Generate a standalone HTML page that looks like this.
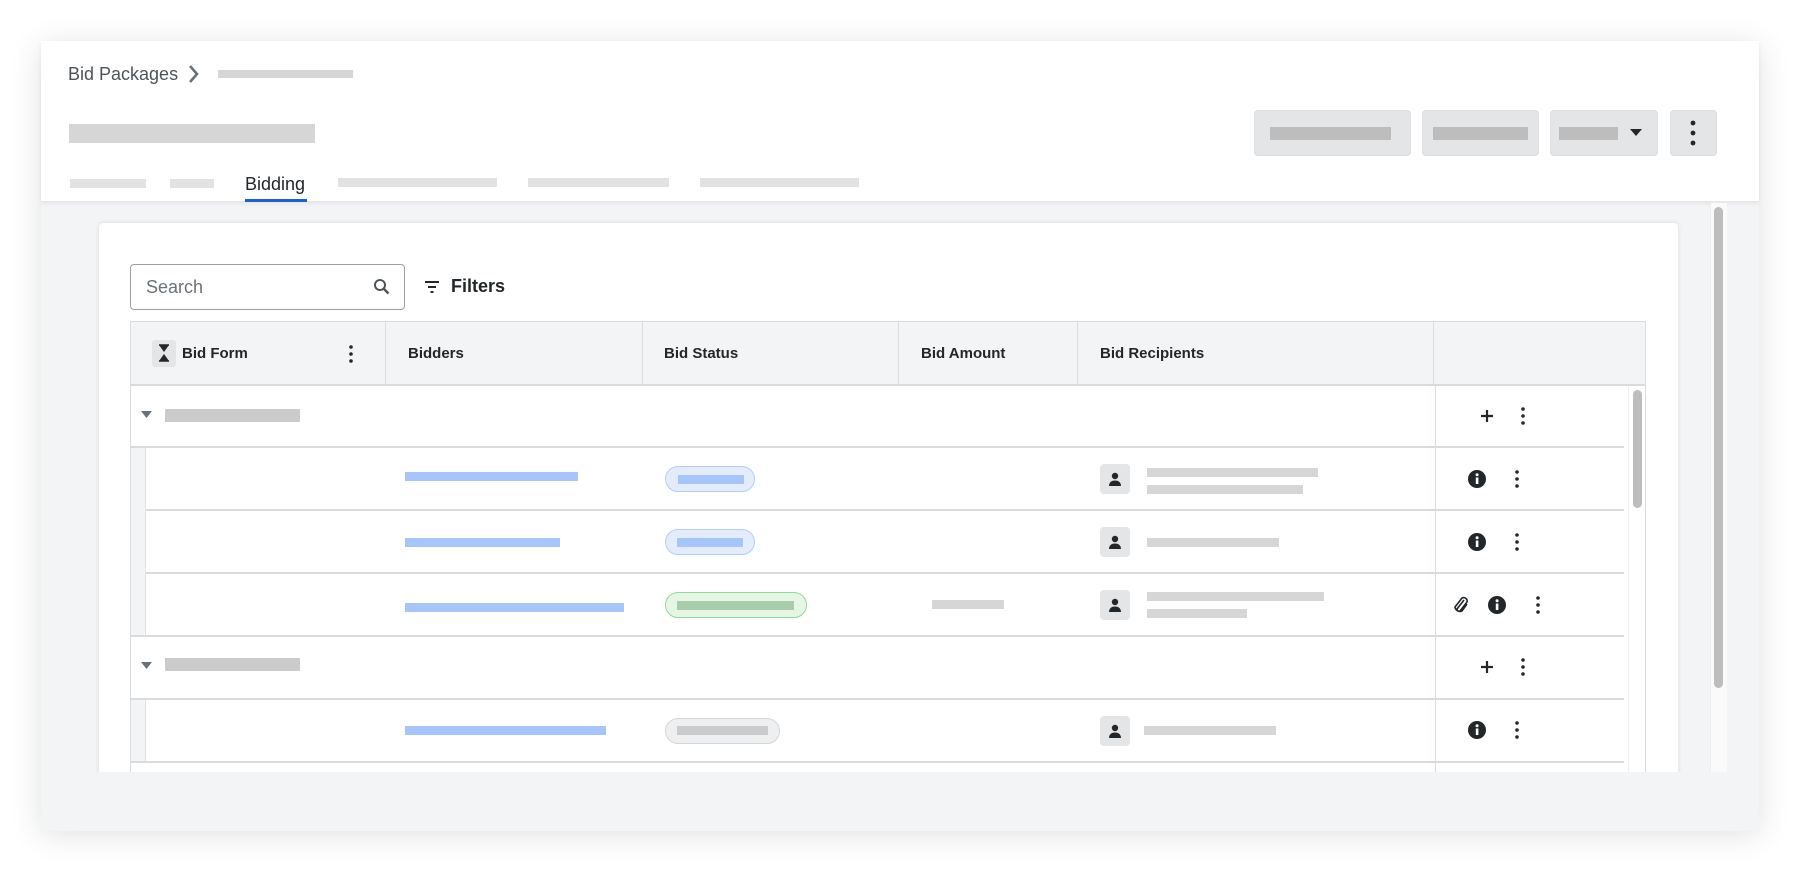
<!DOCTYPE html>
<html><head><style>
*{box-sizing:border-box;margin:0;padding:0}
body{width:1800px;height:873px;background:#fff;font-family:"Liberation Sans",sans-serif;position:relative;overflow:hidden}
.a{position:absolute}
.card{left:41px;top:41px;width:1718px;height:790px;background:#f3f4f6;box-shadow:0 4px 30px rgba(0,0,0,.12)}
.hdr{left:41px;top:41px;width:1718px;height:161px;background:#fff;border-bottom:1px solid #e6e7e9;box-shadow:0 2px 4px rgba(0,0,0,.06)}
.g{background:#d6d6d6}
.tb{background:#e2e2e2}
.btn{background:#e4e5e7;border-radius:4px;border:1px solid #dcdde0}
.bb{background:#bdbdbd}
.panel{left:99px;top:223px;width:1579px;height:550px;background:#fff;border-radius:4px 4px 0 0;box-shadow:0 0 4px rgba(0,0,0,.12)}
.hl{background:#d9dcdf}
.blue{background:#a6c5fa}
.pill{border-radius:14px;height:26px}
.ht{font-weight:bold;font-size:15px;color:#232729;top:345px}
.av{width:30px;height:30px;background:#e4e5e7;border-radius:4px}
</style></head><body>
<div class="a card"></div>
<div class="a hdr"></div>
<div class="a" style="left:68px;top:64px;font-size:18px;color:#4d5459">Bid Packages</div>
<svg class="a" style="left:187px;top:64px" width="14" height="20" viewBox="0 0 14 20"><path d="M3 2l7 8-7 8" fill="none" stroke="#6a7177" stroke-width="2.6"/></svg>
<div class="a g" style="left:218px;top:70px;width:135px;height:8px"></div>
<div class="a g" style="left:69px;top:124px;width:246px;height:19px"></div>
<div class="a tb" style="left:70px;top:179px;width:76px;height:9px"></div>
<div class="a tb" style="left:170px;top:179px;width:44px;height:9px"></div>
<div class="a" style="left:245px;top:174px;font-size:18px;color:#232729">Bidding</div>
<div class="a" style="left:245px;top:199px;width:62px;height:3px;background:#1c5fd8"></div>
<div class="a tb" style="left:338px;top:178px;width:159px;height:9px"></div>
<div class="a tb" style="left:528px;top:178px;width:141px;height:9px"></div>
<div class="a tb" style="left:700px;top:178px;width:159px;height:9px"></div>
<div class="a btn" style="left:1254px;top:110px;width:157px;height:46px"></div>
<div class="a bb" style="left:1270px;top:127px;width:121px;height:13px"></div>
<div class="a btn" style="left:1422px;top:110px;width:117px;height:46px"></div>
<div class="a bb" style="left:1433px;top:127px;width:95px;height:13px"></div>
<div class="a btn" style="left:1550px;top:110px;width:108px;height:46px"></div>
<div class="a bb" style="left:1559px;top:127px;width:59px;height:13px"></div>
<svg class="a" style="left:1630px;top:128px" width="12" height="10"><path d="M0 1h12L6 8z" fill="#232729"/></svg>
<div class="a btn" style="left:1670px;top:110px;width:47px;height:46px"></div>
<svg class="a" style="left:1688px;top:120px" width="10" height="26"><circle cx="5" cy="3" r="2.4" fill="#232729"/><circle cx="5" cy="13" r="2.4" fill="#232729"/><circle cx="5" cy="23" r="2.4" fill="#232729"/></svg>
<div class="a" style="left:1710px;top:203px;width:17px;height:570px;background:#fafafa;border-left:1px solid #eee"></div>
<div class="a" style="left:1714px;top:207px;width:9px;height:481px;background:#bdbdbd;border-radius:5px"></div>
<div class="a panel"></div>
<div class="a" style="left:130px;top:264px;width:275px;height:46px;border:1px solid #9aa1a6;border-radius:4px"></div>
<div class="a" style="left:146px;top:277px;font-size:18px;color:#6a7177">Search</div>
<svg class="a" style="left:373px;top:278px" width="18" height="18" viewBox="0 0 18 18"><circle cx="7" cy="7" r="5" fill="none" stroke="#4d5459" stroke-width="2"/><path d="M10.5 10.5l5 5" stroke="#4d5459" stroke-width="2.4"/></svg>
<svg class="a" style="left:424px;top:280px" width="16" height="14"><path d="M1 2h14M4 7h8M6.5 12h3" stroke="#232729" stroke-width="2"/></svg>
<div class="a" style="left:451px;top:276px;font-size:18px;font-weight:bold;color:#232729">Filters</div>
<div class="a" style="left:130px;top:321px;width:1516px;height:451px;border-left:1px solid #d9dcdf;border-right:1px solid #d9dcdf"></div>
<div class="a" style="left:130px;top:321px;width:1516px;height:65px;background:#f3f4f6;border:1px solid #d9dcdf;border-bottom:2px solid #d9dcdf"></div>
<div class="a hl" style="left:385px;top:321px;width:1px;height:64px"></div>
<div class="a hl" style="left:642px;top:321px;width:1px;height:64px"></div>
<div class="a hl" style="left:898px;top:321px;width:1px;height:64px"></div>
<div class="a hl" style="left:1077px;top:321px;width:1px;height:64px"></div>
<div class="a hl" style="left:1433px;top:321px;width:1px;height:64px"></div>
<div class="a" style="left:152px;top:340px;width:24px;height:27px;background:#e4e5e7;border-radius:3px"></div>
<svg class="a" style="left:158px;top:344px" width="12" height="18"><path d="M1 1h10L6 8zM1 17h10L6 10z" fill="#232729"/><path d="M1 1h10M1 17h10" stroke="#232729" stroke-width="1.5"/></svg>
<div class="a ht" style="left:182px">Bid Form</div>
<svg class="a" style="left:347px;top:344px" width="8" height="20"><circle cx="4" cy="3" r="1.8" fill="#232729"/><circle cx="4" cy="10" r="1.8" fill="#232729"/><circle cx="4" cy="17" r="1.8" fill="#232729"/></svg>
<div class="a ht" style="left:408px">Bidders</div>
<div class="a ht" style="left:664px">Bid Status</div>
<div class="a ht" style="left:921px">Bid Amount</div>
<div class="a ht" style="left:1100px">Bid Recipients</div>
<div class="a hl" style="left:131px;top:446px;width:1493px;height:2px"></div>
<div class="a hl" style="left:146px;top:509px;width:1478px;height:2px"></div>
<div class="a hl" style="left:146px;top:572px;width:1478px;height:2px"></div>
<div class="a hl" style="left:131px;top:635px;width:1493px;height:2px"></div>
<div class="a hl" style="left:131px;top:761px;width:1493px;height:2px"></div>
<div class="a hl" style="left:131px;top:698px;width:1493px;height:2px"></div>
<div class="a" style="left:131px;top:448px;width:15px;height:187px;background:#f3f4f6;border-right:1px solid #e0e2e4"></div>
<div class="a" style="left:131px;top:700px;width:15px;height:61px;background:#f3f4f6;border-right:1px solid #e0e2e4"></div>
<svg class="a" style="left:141px;top:411px" width="12" height="8"><path d="M0 0h11L5.5 7z" fill="#6a7177"/></svg>
<div class="a" style="left:165px;top:409px;width:135px;height:13px;background:#cbcbcb"></div>
<svg class="a" style="left:141px;top:662px" width="12" height="8"><path d="M0 0h11L5.5 7z" fill="#6a7177"/></svg>
<div class="a" style="left:165px;top:658px;width:135px;height:13px;background:#cbcbcb"></div>
<div class="a blue" style="left:405px;top:472px;width:173px;height:9px"></div>
<div class="a pill" style="left:665px;top:466px;width:90px;background:#e4ecfb;border:1px solid #b4cdf7"></div>
<div class="a blue" style="left:678px;top:475px;width:66px;height:9px"></div>
<div class="a blue" style="left:405px;top:538px;width:155px;height:9px"></div>
<div class="a pill" style="left:665px;top:529px;width:90px;background:#e4ecfb;border:1px solid #b4cdf7"></div>
<div class="a blue" style="left:677px;top:538px;width:66px;height:9px"></div>
<div class="a blue" style="left:405px;top:603px;width:219px;height:9px"></div>
<div class="a pill" style="left:665px;top:592px;width:142px;background:#e5f6e5;border:1px solid #93d79a"></div>
<div class="a" style="left:677px;top:601px;width:117px;height:9px;background:#a9cdab"></div>
<div class="a" style="left:932px;top:600px;width:72px;height:9px;background:#d6d6d6"></div>
<div class="a blue" style="left:405px;top:726px;width:201px;height:9px"></div>
<div class="a pill" style="left:665px;top:718px;width:115px;background:#eeeff0;border:1px solid #d6d6d6"></div>
<div class="a" style="left:677px;top:726px;width:91px;height:9px;background:#cbcbcb"></div>
<div class="a av" style="left:1100px;top:464px"></div>
<div class="a av" style="left:1100px;top:527px"></div>
<div class="a av" style="left:1100px;top:590px"></div>
<div class="a av" style="left:1100px;top:716px"></div>
<svg class="a" style="left:1108px;top:472px" width="14" height="14"><circle cx="7" cy="4" r="3.2" fill="#232729"/><path d="M1 14c0-4 3-5.5 6-5.5s6 1.5 6 5.5z" fill="#232729"/></svg>
<svg class="a" style="left:1108px;top:535px" width="14" height="14"><circle cx="7" cy="4" r="3.2" fill="#232729"/><path d="M1 14c0-4 3-5.5 6-5.5s6 1.5 6 5.5z" fill="#232729"/></svg>
<svg class="a" style="left:1108px;top:598px" width="14" height="14"><circle cx="7" cy="4" r="3.2" fill="#232729"/><path d="M1 14c0-4 3-5.5 6-5.5s6 1.5 6 5.5z" fill="#232729"/></svg>
<svg class="a" style="left:1108px;top:724px" width="14" height="14"><circle cx="7" cy="4" r="3.2" fill="#232729"/><path d="M1 14c0-4 3-5.5 6-5.5s6 1.5 6 5.5z" fill="#232729"/></svg>
<div class="a g" style="left:1147px;top:468px;width:171px;height:9px"></div>
<div class="a g" style="left:1147px;top:485px;width:156px;height:9px"></div>
<div class="a g" style="left:1147px;top:538px;width:132px;height:9px"></div>
<div class="a g" style="left:1147px;top:592px;width:177px;height:9px"></div>
<div class="a g" style="left:1147px;top:609px;width:100px;height:9px"></div>
<div class="a g" style="left:1144px;top:726px;width:132px;height:9px"></div>
<div class="a" style="left:1435px;top:386px;width:1px;height:386px;background:#d9dcdf;box-shadow:-3px 0 6px rgba(0,0,0,.08)"></div>
<div class="a" style="left:1628px;top:386px;width:17px;height:386px;background:#fff;border-left:1px solid #eee"></div>
<div class="a" style="left:1633px;top:390px;width:9px;height:118px;background:#bdbdbd;border-radius:5px"></div>
<svg class="a" style="left:1480px;top:409px" width="14" height="14"><path d="M7 1v12M1 7h12" stroke="#232729" stroke-width="2.2"/></svg>
<svg class="a" style="left:1519px;top:406px" width="8" height="20"><circle cx="4" cy="3" r="1.8" fill="#232729"/><circle cx="4" cy="10" r="1.8" fill="#232729"/><circle cx="4" cy="17" r="1.8" fill="#232729"/></svg>
<svg class="a" style="left:1480px;top:660px" width="14" height="14"><path d="M7 1v12M1 7h12" stroke="#232729" stroke-width="2.2"/></svg>
<svg class="a" style="left:1519px;top:657px" width="8" height="20"><circle cx="4" cy="3" r="1.8" fill="#232729"/><circle cx="4" cy="10" r="1.8" fill="#232729"/><circle cx="4" cy="17" r="1.8" fill="#232729"/></svg>
<svg class="a" style="left:1468px;top:470px" width="18" height="18"><circle cx="9" cy="9" r="9" fill="#232729"/><rect x="7.8" y="7.5" width="2.6" height="6.5" fill="#fff"/><circle cx="9.1" cy="4.8" r="1.5" fill="#fff"/></svg>
<svg class="a" style="left:1513px;top:469px" width="8" height="20"><circle cx="4" cy="3" r="1.8" fill="#232729"/><circle cx="4" cy="10" r="1.8" fill="#232729"/><circle cx="4" cy="17" r="1.8" fill="#232729"/></svg>
<svg class="a" style="left:1468px;top:533px" width="18" height="18"><circle cx="9" cy="9" r="9" fill="#232729"/><rect x="7.8" y="7.5" width="2.6" height="6.5" fill="#fff"/><circle cx="9.1" cy="4.8" r="1.5" fill="#fff"/></svg>
<svg class="a" style="left:1513px;top:532px" width="8" height="20"><circle cx="4" cy="3" r="1.8" fill="#232729"/><circle cx="4" cy="10" r="1.8" fill="#232729"/><circle cx="4" cy="17" r="1.8" fill="#232729"/></svg>
<svg class="a" style="left:1452px;top:595px" width="18" height="20" viewBox="0 0 18 20"><path d="M12 5l-7 9a2 2 0 0 0 3 2l7-9a3.5 3.5 0 0 0-5-4l-7 9a5 5 0 0 0 7 4l5-7" fill="none" stroke="#232729" stroke-width="1.6"/></svg>
<svg class="a" style="left:1488px;top:596px" width="18" height="18"><circle cx="9" cy="9" r="9" fill="#232729"/><rect x="7.8" y="7.5" width="2.6" height="6.5" fill="#fff"/><circle cx="9.1" cy="4.8" r="1.5" fill="#fff"/></svg>
<svg class="a" style="left:1534px;top:595px" width="8" height="20"><circle cx="4" cy="3" r="1.8" fill="#232729"/><circle cx="4" cy="10" r="1.8" fill="#232729"/><circle cx="4" cy="17" r="1.8" fill="#232729"/></svg>
<svg class="a" style="left:1468px;top:721px" width="18" height="18"><circle cx="9" cy="9" r="9" fill="#232729"/><rect x="7.8" y="7.5" width="2.6" height="6.5" fill="#fff"/><circle cx="9.1" cy="4.8" r="1.5" fill="#fff"/></svg>
<svg class="a" style="left:1513px;top:720px" width="8" height="20"><circle cx="4" cy="3" r="1.8" fill="#232729"/><circle cx="4" cy="10" r="1.8" fill="#232729"/><circle cx="4" cy="17" r="1.8" fill="#232729"/></svg>
<div class="a" style="left:41px;top:772px;width:1718px;height:59px;background:#f3f4f6"></div>
</body></html>
